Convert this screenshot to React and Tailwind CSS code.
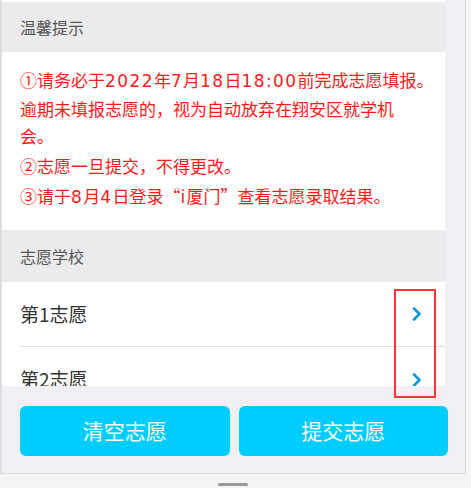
import React from "react";

const font = { fontFamily: '"Noto Sans CJK SC", "Noto Sans", sans-serif' };
const latin = { fontFamily: '"DejaVu Sans", "Noto Sans CJK SC", sans-serif' };

function Chevron() {
  return (
    <svg width="10" height="14" viewBox="0 0 10 14" className="shrink-0">
      <path d="M2 1.5 L7.5 7 L2 12.5" fill="none" stroke="#1296db" strokeWidth="2.6" strokeLinecap="round" strokeLinejoin="round" />
    </svg>
  );
}

function SectionHeader({ children, className = "" }) {
  return (
    <div className={`flex items-center pl-[18px] bg-[#ebebed] text-[16px] text-[#555] ${className}`}>
      {children}
    </div>
  );
}

function ChoiceRow({ label, divider }) {
  return (
    <div className="pl-[18px] bg-white">
      <div className={`flex items-center justify-between h-[65px] pr-[23px] ${divider ? "border-b border-[#dedede]" : ""}`}>
        <span className="text-[19px] text-[#333]">{label}</span>
        <Chevron />
      </div>
    </div>
  );
}

// digits in the reference are wider than the CJK font's own
const N = ({ children }) => (
  <span className="tracking-[1.4px]" style={latin}>
    {children}
  </span>
);

export default function App() {
  return (
    <div className="relative w-[471px] h-[488px] bg-[#f4f4f4] overflow-hidden" style={font}>
      <div className="w-[466px] h-[474px] flex flex-col bg-[#efeff4] border-l-2 border-r border-b border-[#dcdcdf]">
        <div className="h-[386px] overflow-hidden">
          <div className="w-[443px] bg-white pt-[2px]">
            <SectionHeader className="h-[50px]">温馨提示</SectionHeader>
            <div className="h-[178px] pl-[18px] pr-[20px] pt-[14px] text-[17px] leading-[27px] text-[#ff1a1a]">
              <p>
                <span className="block whitespace-nowrap">
                  ①请务必于<N>2022</N>年<N>7</N>月<N>18</N>日<N>18:00</N>前完成志愿填报。
                </span>
                逾期未填报志愿的，视为自动放弃在翔安区就学机会。
              </p>
              <p className="mt-[3px]">②志愿一旦提交，不得更改。</p>
              <p className="mt-[3px]">
                ③请于<N>8</N>月<N>4</N>日登录“<N>i</N>厦门”查看志愿录取结果。
              </p>
            </div>
            <SectionHeader className="h-[52px]">志愿学校</SectionHeader>
            <ChoiceRow label="第1志愿" divider />
            <ChoiceRow label="第2志愿" />
          </div>
        </div>
        <div className="flex-1 flex gap-[9px] pl-[18px] pr-[17px] pt-[20px]">
          <button className="flex-1 h-[50px] rounded-[6px] bg-[#00ccff] text-white text-[21px]">清空志愿</button>
          <button className="flex-1 h-[50px] rounded-[6px] bg-[#00ccff] text-white text-[21px]">提交志愿</button>
        </div>
      </div>
      <div className="w-[466px] flex justify-center pt-[9px]">
        <div className="w-[30px] h-[3px] rounded-full bg-[#9a9a9a]" />
      </div>
      <div className="absolute left-[394px] top-[289px] w-[42px] h-[109px] border-2 border-[#ff3535]" />
    </div>
  );
}
